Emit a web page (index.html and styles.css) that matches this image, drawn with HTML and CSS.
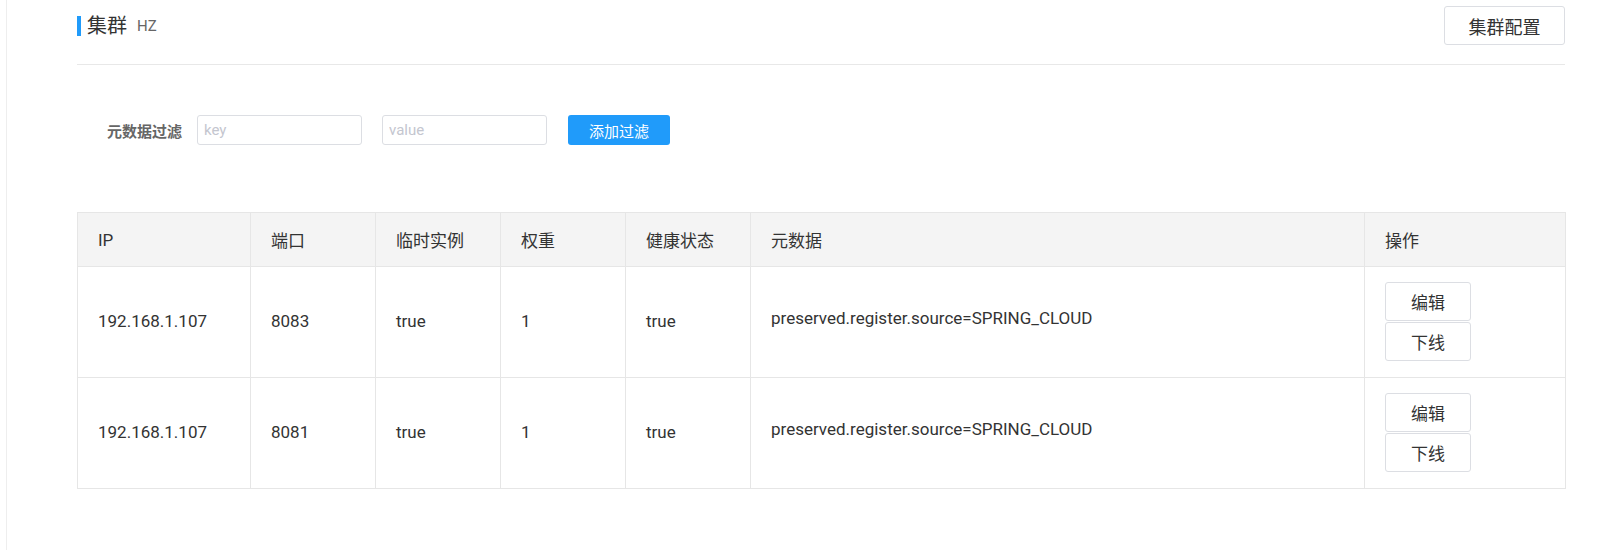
FILE: index.html
```html
<!DOCTYPE html>
<html lang="zh-CN">
<head>
<meta charset="utf-8">
<title>集群</title>
<link rel="stylesheet" href="styles.css">
</head>
<body>
<div class="page">
  <div class="page-header">
    <div class="title">
      <span class="title-bar"></span>
      <span class="title-text">集群</span>
      <span class="title-sub">HZ</span>
    </div>
    <button class="btn btn-normal">集群配置</button>
  </div>

  <div class="filter">
    <span class="filter-label">元数据过滤</span>
    <input class="input" type="text" placeholder="key">
    <input class="input input-value" type="text" placeholder="value">
    <button class="btn-primary">添加过滤</button>
  </div>

  <table class="grid">
    <colgroup>
      <col class="c-ip"><col class="c-port"><col class="c-eph"><col class="c-weight"><col class="c-health"><col class="c-meta"><col class="c-op">
    </colgroup>
    <thead>
      <tr>
        <th>IP</th><th>端口</th><th>临时实例</th><th>权重</th><th>健康状态</th><th>元数据</th><th>操作</th>
      </tr>
    </thead>
    <tbody>
      <tr>
        <td>192.168.1.107</td><td>8083</td><td>true</td><td>1</td><td>true</td>
        <td class="meta">preserved.register.source=SPRING_CLOUD</td>
        <td class="ops"><button class="btn btn-op">编辑</button><button class="btn btn-op">下线</button></td>
      </tr>
      <tr>
        <td>192.168.1.107</td><td>8081</td><td>true</td><td>1</td><td>true</td>
        <td class="meta">preserved.register.source=SPRING_CLOUD</td>
        <td class="ops"><button class="btn btn-op">编辑</button><button class="btn btn-op">下线</button></td>
      </tr>
    </tbody>
  </table>
</div>
</body>
</html>
```

FILE: styles.css
```css
html, body {
  margin: 0;
  padding: 0;
  background: #fff;
}

body {
  font-family: Roboto, "Noto Sans CJK SC", sans-serif;
  color: #333;
}

.page {
  margin-left: 6px;
  border-left: 1px solid #eeeeee;
  min-height: 550px;
  box-sizing: border-box;
  padding: 6px 36px 0 70px;
}

.page-header {
  display: flex;
  align-items: center;
  justify-content: space-between;
  padding-bottom: 19px;
  border-bottom: 1px solid #e8e8e8;
}

.title {
  display: flex;
  align-items: center;
}

.title-bar {
  width: 4px;
  height: 20px;
  background: #209bfa;
  margin-right: 6px;
}

.title-text {
  font-size: 20px;
  line-height: 24px;
  color: #333;
}

.title-sub {
  font-size: 15px;
  color: #666;
  margin-left: 10px;
  line-height: 24px;
}

.btn {
  font-family: Roboto, "Noto Sans CJK SC", sans-serif;
  background: #fff;
  border: 1px solid #dcdee3;
  border-radius: 3px;
  color: #333;
  cursor: pointer;
  padding: 0;
}

.btn-normal {
  width: 121px;
  height: 39px;
  font-size: 18px;
}

.filter {
  display: flex;
  align-items: center;
  margin-top: 50px;
  padding-left: 30px;
}

.filter-label {
  font-size: 15px;
  font-weight: bold;
  color: #666;
  margin-right: 15px;
}

.input {
  width: 165px;
  height: 30px;
  box-sizing: border-box;
  border: 1px solid #dcdee3;
  border-radius: 3px;
  padding: 0 6px;
  font-family: Roboto, "Noto Sans CJK SC", sans-serif;
  font-size: 15px;
  color: #333;
  outline: none;
}

.input::placeholder {
  color: #c4c6cf;
}

.input-value {
  margin-left: 20px;
}

.btn-primary {
  margin-left: 21px;
  width: 102px;
  height: 30px;
  border: none;
  border-radius: 3px;
  background: #209bfa;
  color: #fff;
  font-family: Roboto, "Noto Sans CJK SC", sans-serif;
  font-size: 15px;
  padding: 0;
}

.grid {
  margin-top: 67px;
  width: 1488px;
  border-collapse: collapse;
  table-layout: fixed;
  font-size: 17px;
}

.c-ip { width: 173px; }
.c-port, .c-eph, .c-weight, .c-health { width: 125px; }
.c-meta { width: 614px; }
.c-op { width: 201px; }

.grid th,
.grid td {
  border: 1px solid #e6e6e6;
  padding: 0 20px;
  text-align: left;
  vertical-align: middle;
  color: #333;
}

.grid th {
  height: 53px;
  background: #f4f4f4;
  font-weight: normal;
}

.grid td {
  height: 108px;
  padding-bottom: 2px;
}

.grid td.meta {
  height: 102px;
  padding-bottom: 8px;
}

.ops .btn-op {
  display: block;
  width: 86px;
  height: 39px;
  font-size: 17px;
  margin: 0 0 1px 0;
}

.ops .btn-op:last-child {
  margin-bottom: 0;
}
```
